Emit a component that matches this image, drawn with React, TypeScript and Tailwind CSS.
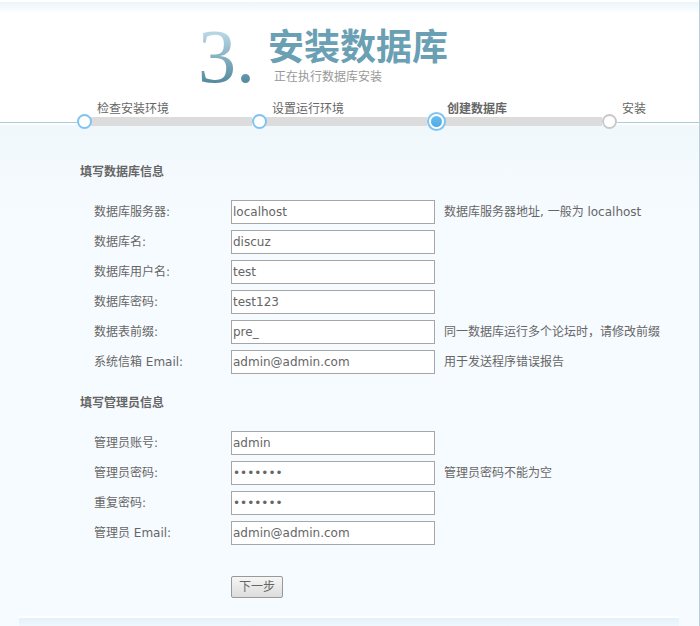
import React from 'react';

interface Step {
  title: string;
  state: 'done' | 'active' | 'todo';
}

interface Field {
  id: string;
  label: string;
  value: string;
  type?: string;
  hint?: string;
}

const steps: Step[] = [
  { title: '检查安装环境', state: 'done' },
  { title: '设置运行环境', state: 'done' },
  { title: '创建数据库', state: 'active' },
  { title: '安装', state: 'todo' },
];

const dbFields: Field[] = [
  { id: 'dbhost', label: '数据库服务器:', value: 'localhost', hint: '数据库服务器地址, 一般为 localhost' },
  { id: 'dbname', label: '数据库名:', value: 'discuz' },
  { id: 'dbuser', label: '数据库用户名:', value: 'test' },
  { id: 'dbpw', label: '数据库密码:', value: 'test123' },
  { id: 'tablepre', label: '数据表前缀:', value: 'pre_', hint: '同一数据库运行多个论坛时，请修改前缀' },
  { id: 'adminemail', label: '系统信箱 Email:', value: 'admin@admin.com', hint: '用于发送程序错误报告' },
];

const adminFields: Field[] = [
  { id: 'username', label: '管理员账号:', value: 'admin' },
  { id: 'password', label: '管理员密码:', value: 'discuz1', type: 'password', hint: '管理员密码不能为空' },
  { id: 'password2', label: '重复密码:', value: 'discuz1', type: 'password' },
  { id: 'email', label: '管理员 Email:', value: 'admin@admin.com' },
];

const StepDot: React.FC<{ state: Step['state'] }> = ({ state }) => {
  if (state === 'active') {
    return (
      <span className="z-10 flex h-[19px] w-[19px] shrink-0 items-center justify-center rounded-full border-2 border-[#7fc4f0] bg-white">
        <span className="h-[11px] w-[11px] rounded-full bg-linear-to-b from-[#6bbcec] to-[#4cabe6]" />
      </span>
    );
  }
  return (
    <span
      className={`z-10 h-[15px] w-[15px] shrink-0 rounded-full border-2 bg-white ${
        state === 'done' ? 'border-[#7fc4f0]' : 'border-[#c9c9c9]'
      }`}
    />
  );
};

const StepBar: React.FC = () => (
  <ol className="flex">
    <li aria-hidden="true" className="flex w-[77px] shrink-0 flex-col justify-end">
      <div className="flex h-[19px] items-center bg-linear-to-b from-white from-[13px] to-[#f1f8fc] to-[13px]">
        <span className="h-[3px] w-full border-b border-[#a9cddb]" />
      </div>
    </li>
    {steps.map((step, i) => {
      const last = i === steps.length - 1;
      return (
        <li key={step.title} className={last ? 'flex-1' : 'w-[175px] shrink-0'}>
          <div
            className={`-mb-1 h-4 pl-5 leading-[18px] ${step.state === 'active' ? 'font-bold' : ''}`}
          >
            {step.title}
          </div>
          <div className="flex h-[19px] items-center bg-linear-to-b from-white from-[13px] to-[#f1f8fc] to-[13px]">
            <StepDot state={step.state} />
            <span
              className={last ? 'h-[3px] flex-1 border-b border-[#a9cddb]' : '-mx-1 h-[9px] flex-1 bg-[#dcdcdc]'}
            />
          </div>
        </li>
      );
    })}
  </ol>
);

const FieldGroup: React.FC<{ title: string; fields: Field[] }> = ({ title, fields }) => (
  <fieldset>
    <legend className="font-bold leading-4">{title}</legend>
    <div className="flex flex-col gap-1.5 pt-5 pl-[14px]">
      {fields.map((field) => (
        <div key={field.id} className="flex h-6 items-center">
          <label htmlFor={field.id} className="w-[137px] shrink-0">
            {field.label}
          </label>
          <input
            id={field.id}
            type={field.type ?? 'text'}
            defaultValue={field.value}
            className="h-6 w-[204px] shrink-0 border border-[#a6a6a6] bg-white px-px"
          />
          {field.hint && <span className="pl-[9px] whitespace-nowrap">{field.hint}</span>}
        </div>
      ))}
    </div>
  </fieldset>
);

const App: React.FC = () => {
  return (
    <div className="min-h-screen border-r border-[#b5ced8] bg-[#f6fbff] font-['DejaVu_Sans','Noto_Sans_CJK_SC',sans-serif] text-xs text-[#666]">
      <header className="bg-white pt-0.5">
        <div className="h-3 bg-linear-to-b from-[#ebf5fc] to-white" />
        <div className="flex h-[86px] pt-[13px] pl-[198px]">
          <span className="w-[70px] bg-linear-to-b from-[#b5d5e2] from-10% to-[#3f7b91] to-90% bg-clip-text font-['Liberation_Serif',serif] text-[76px] leading-[58px] text-transparent">
            3.
          </span>
          <div>
            <h1 className="text-4xl leading-[42px] font-bold text-[#6a9fb4]">安装数据库</h1>
            <p className="pl-1.5 leading-4 text-[#999]">正在执行数据库安装</p>
          </div>
        </div>
        <StepBar />
      </header>

      <main className="bg-linear-to-b from-[#f1f8fc] to-[#f6fbff] to-[90px] px-5 pt-[33px]">
        <form className="flex flex-col gap-[21px] pl-[60px]">
          <FieldGroup title="填写数据库信息" fields={dbFields} />
          <FieldGroup title="填写管理员信息" fields={adminFields} />
          <div className="pt-2.5 pl-[151px]">
            <button
              type="button"
              className="h-[22px] w-[52px] rounded-xs border border-[#999] bg-linear-to-b from-[#f6f6f6] to-[#dcdcdc]"
            >
              下一步
            </button>
          </div>
        </form>
        <footer className="mt-[18px] -ml-px h-2.5 border-t-2 border-white bg-linear-to-b from-[#e4f1fa] to-[#eef7fc]" />
      </main>
    </div>
  );
};

export default App;
